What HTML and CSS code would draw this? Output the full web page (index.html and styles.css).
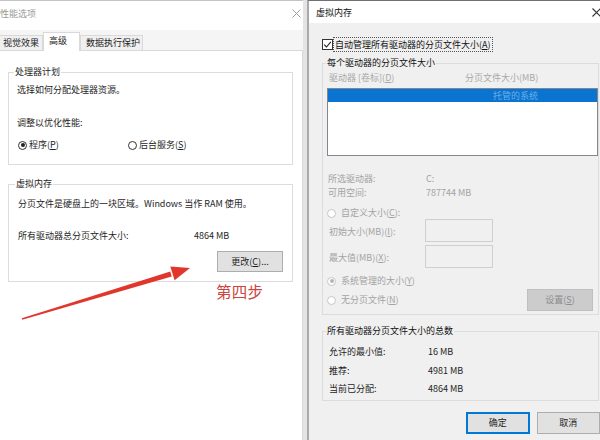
FILE: index.html
```html
<!DOCTYPE html>
<html lang="zh-CN">
<head>
<meta charset="utf-8">
<title>虚拟内存</title>
<link rel="stylesheet" href="styles.css">
</head>
<body>
<div class="screen">
  <div class="win-left">
    <div class="titlebar tb-left">
      <span class="title title-inactive">性能选项</span>
      <svg class="close" width="9" height="9" viewBox="0 0 9 9"><path d="M0.5 0.5L8.5 8.5M8.5 0.5L0.5 8.5" stroke="#a0a0a0" stroke-width="1"/></svg>
    </div>
    <div class="tabs">
      <div class="tab t1">视觉效果</div>
      <div class="tab t2 active">高级</div>
      <div class="tab t3">数据执行保护</div>
    </div>
    <div class="panel">
      <div class="group g-cpu">
        <div class="legend">处理器计划</div>
        <div class="line l-cpu1">选择如何分配处理器资源。</div>
        <div class="line l-cpu2">调整以优化性能:</div>
        <div class="radio-row">
          <div class="radio-item ri-first"><span class="radio checked"></span><span>程序(<u>P</u>)</span></div>
          <div class="radio-item"><span class="radio"></span><span>后台服务(<u>S</u>)</span></div>
        </div>
      </div>
      <div class="group g-vm">
        <div class="legend">虚拟内存</div>
        <div class="line l-vm1">分页文件是硬盘上的一块区域。Windows 当作 RAM 使用。</div>
        <div class="line l-vm2"><span class="vm-label">所有驱动器总分页文件大小:</span><span>4864 MB</span></div>
        <div class="btn-row"><div class="btn btn-change">更改(<u>C</u>)...</div></div>
      </div>
      <div class="step">第四步</div>
    </div>
  </div>
  <div class="sep"></div>
  <div class="win-right">
    <div class="titlebar tb-right">
      <span class="title">虚拟内存</span>
      <svg class="close" width="9" height="9" viewBox="0 0 9 9"><path d="M0.5 0.5L8.5 8.5M8.5 0.5L0.5 8.5" stroke="#333" stroke-width="1.1"/></svg>
    </div>
    <div class="rbody">
      <div class="chk-row">
        <span class="chk"><svg width="9" height="9" viewBox="0 0 9 9"><path d="M1.2 4.6L3.5 7L7.8 1.8" fill="none" stroke="#222" stroke-width="1.1"/></svg></span>
        <span class="focus">自动管理所有驱动器的分页文件大小(<u>A</u>)</span>
      </div>
      <div class="group g-drive">
        <div class="legend lg-r">每个驱动器的分页文件大小</div>
        <div class="hdr"><span class="hdr-c1">驱动器 [卷标](<u>D</u>)</span><span>分页文件大小(MB)</span></div>
        <div class="listbox">
          <div class="sel-row">托管的系统</div>
        </div>
        <div class="kv kv1 dis"><span class="k">所选驱动器:</span><span class="v">C:</span></div>
        <div class="kv kv2 dis"><span class="k">可用空间:</span><span class="v">787744 MB</span></div>
        <div class="r-radio r-custom dis"><span class="radio dis-radio"></span><span>自定义大小(<u>C</u>):</span></div>
        <div class="field f1 dis"><span class="fk">初始大小(MB)(<u>I</u>):</span><span class="tbox"></span></div>
        <div class="field f2 dis"><span class="fk">最大值(MB)(<u>X</u>):</span><span class="tbox"></span></div>
        <div class="r-radio r-sys dis"><span class="radio dis-radio checked-dis"></span><span>系统管理的大小(<u>Y</u>)</span></div>
        <div class="r-radio r-none dis"><span class="radio dis-radio"></span><span>无分页文件(<u>N</u>)</span><div class="btn btn-set">设置(<u>S</u>)</div></div>
      </div>
      <div class="group g-total">
        <div class="legend lg-r">所有驱动器分页文件大小的总数</div>
        <div class="kv2r t1r"><span class="k2">允许的最小值:</span><span>16 MB</span></div>
        <div class="kv2r t2r"><span class="k2">推荐:</span><span>4981 MB</span></div>
        <div class="kv2r t3r"><span class="k2">当前已分配:</span><span>4864 MB</span></div>
      </div>
      <div class="bottom-btns">
        <div class="btn btn-ok">确定</div>
        <div class="btn btn-cancel">取消</div>
      </div>
    </div>
  </div>
  <svg class="arrow" width="600" height="440" viewBox="0 0 600 440">
    <polygon points="22.2,319.7 21.8,318.3 170.3,271.6 171.7,276.4" fill="#e0362c"/>
    <polygon points="190,268 170.3,266.4 174.6,280.2" fill="#e0362c"/>
  </svg>
</div>
</body>
</html>
```
FILE: styles.css
```css
html, body { margin: 0; padding: 0; background: #fff; }
.screen {
  position: relative;
  width: 600px;
  height: 440px;
  overflow: hidden;
  display: flex;
  font-family: "Noto Sans CJK SC", "Microsoft YaHei", sans-serif;
  font-size: 9px;
  line-height: 12px;
  color: #1e1e1e;
}
u { text-decoration: underline; text-underline-offset: 1px; }

/* left window */
.win-left {
  width: 303px;
  flex: none;
  display: flex;
  flex-direction: column;
  background: #f5f5f5;
  border-top: 1px solid #c4c4c4;
  box-sizing: border-box;
}
.titlebar {
  display: flex;
  justify-content: space-between;
  align-items: flex-start;
  background: #fff;
  box-sizing: border-box;
}
.tb-left { height: 29px; padding: 7px 2px 0 0; }
.title-inactive { color: #9a9a9a; margin-left: 0; }
.tb-left .close { margin-top: 1px; }
.tabs { height: 20px; display: flex; align-items: flex-end; }
.tab {
  box-sizing: border-box;
  height: 15px;
  line-height: 13px;
  border: 1px solid #d9d9d9;
  border-bottom: none;
  background: #f0f0f0;
  padding-left: 3px;
  color: #222;
}
.t1 { width: 43px; border-left: none; }
.t2 { width: 37px; padding-left: 5px; }
.t3 { width: 63px; padding-left: 5px; }
.tab.active {
  height: 19px;
  background: #fff;
  line-height: 15px;
  margin-bottom: -1px;
  position: relative;
  z-index: 1;
}
.panel {
  flex: 1;
  background: #fff;
  border-top: 1px solid #d9d9d9;
  border-right: 1px solid #d9d9d9;
  display: flex;
  flex-direction: column;
}
.group {
  border: 1px solid #dcdcdc;
  box-sizing: border-box;
  display: flex;
  flex-direction: column;
}
.legend {
  align-self: flex-start;
  height: 12px;
  margin-top: -7px;
  padding: 0 1px;
  background: #fff;
}
.g-cpu { margin: 21px 0 0 8px; width: 285px; padding: 0 0 13px 8px; }
.g-cpu .legend { margin-left: -3px; }
.line { height: 12px; white-space: nowrap; }
.l-cpu1 { margin-top: 6px; }
.l-cpu2 { margin-top: 21px; }
.radio-row { margin-top: 10px; height: 12px; display: flex; align-items: center; }
.radio-item { display: flex; align-items: center; gap: 2px; }
.ri-first { width: 110px; margin-left: 1px; }
.radio {
  width: 9px;
  height: 9px;
  box-sizing: border-box;
  border: 1px solid #333;
  border-radius: 50%;
  background: #fff;
  display: inline-flex;
  align-items: center;
  justify-content: center;
  flex: none;
}
.radio.checked::after {
  content: "";
  width: 4px;
  height: 4px;
  border-radius: 50%;
  background: #222;
}
.g-vm { margin: 19px 0 0 8px; width: 285px; padding: 0 9px 9px 9px; }
.g-vm .legend { margin-left: -3px; }
.l-vm1 { margin-top: 8px; }
.l-vm2 { margin-top: 20px; display: flex; }
.vm-label { width: 176px; }
.btn-row { margin-top: 9px; display: flex; justify-content: flex-end; }
.btn {
  box-sizing: border-box;
  height: 21px;
  background: #e1e1e1;
  border: 1px solid #adadad;
  display: flex;
  align-items: center;
  justify-content: center;
}
.btn-change { width: 66px; }
.step {
  margin: 0 0 0 216px;
  font-size: 15.5px;
  line-height: 18px;
  color: #c9453e;
  letter-spacing: 0.3px;
}

.sep { width: 4px; flex: none; background: #e4e4e4; }

/* right window */
.win-right {
  width: 293px;
  flex: none;
  box-sizing: border-box;
  border-left: 2px solid #a9a9a9;
  border-top: 1px solid #707070;
  background: #f0f0f0;
  display: flex;
  flex-direction: column;
}
.tb-right { height: 22px; padding: 6px 0 0 7px; }
.tb-right .title { color: #111; }
.tb-right .close { margin: 1px -1px 0 0; }
.rbody { padding: 14px 0 0 13px; display: flex; flex-direction: column; }
.chk-row { height: 14px; display: flex; align-items: center; }
.chk {
  width: 11px; height: 11px; box-sizing: border-box;
  border: 1px solid #333; background: #fff;
  display: flex; align-items: center; justify-content: center;
}
.focus {
  margin-left: 1px;
  outline: 1px dotted #555;
  outline-offset: 0;
  padding: 0 1px;
  line-height: 13px;
  color: #111;
}
.g-drive { margin-top: 12px; width: 277px; padding: 0 0 3px 0; }
.lg-r { background: #f0f0f0; margin-left: 3px; color: #111; }
.dis { color: #a3a3a3; }
.hdr { margin-top: 3px; height: 12px; display: flex; color: #a8a8a8; padding-left: 6px; }
.hdr-c1 { width: 136px; }
.listbox {
  margin: 4px 0 0 4px;
  width: 271px;
  height: 68px;
  box-sizing: border-box;
  border: 1px solid #828790;
  background: #fff;
}
.sel-row {
  height: 13px;
  background: #0a74d0;
  color: #6aaee9;
  padding-left: 165px;
  line-height: 13px;
}
.kv { height: 12px; display: flex; padding-left: 5px; }
.kv1 { margin-top: 17px; }
.kv2 { margin-top: 2px; }
.k { width: 98px; }
.r-radio { height: 12px; display: flex; align-items: center; gap: 5px; padding-left: 4px; }
.dis-radio { border-color: #c6c6c6; background: #fff; }
.checked-dis::after {
  content: "";
  width: 4px; height: 4px; border-radius: 50%;
  background: #b5b5b5;
}
.r-custom { margin-top: 8px; }
.field { height: 23px; display: flex; align-items: center; padding-left: 6px; }
.f2 { margin-top: 3px; }
.fk { width: 96px; padding-top: 3px; }
.tbox {
  width: 68px; height: 23px; box-sizing: border-box;
  border: 1px solid #cfcfcf; background: #f0f0f0;
}
.r-sys { margin-top: 7px; }
.r-none { margin-top: 2px; height: 22px; }
.btn-set {
  margin-left: auto;
  margin-right: 5px;
  width: 66px; height: 22px;
  background: #cccccc;
  border-color: #bfbfbf;
  color: #8c8c8c;
}
.g-total { margin-top: 16px; width: 277px; padding: 0 0 5px 6px; }
.g-total .lg-r { margin-left: -3px; }
.kv2r { height: 12px; display: flex; }
.k2 { width: 99px; }
.t1r { margin-top: 9px; }
.t2r { margin-top: 7px; }
.t3r { margin-top: 6px; }
.bottom-btns { margin: 11px 0 0 144px; display: flex; gap: 7px; }
.btn-ok { width: 64px; height: 22px; border: 2px solid #0078d7; }
.btn-cancel { width: 64px; height: 22px; }

.arrow { position: absolute; left: 0; top: 0; pointer-events: none; }
```
